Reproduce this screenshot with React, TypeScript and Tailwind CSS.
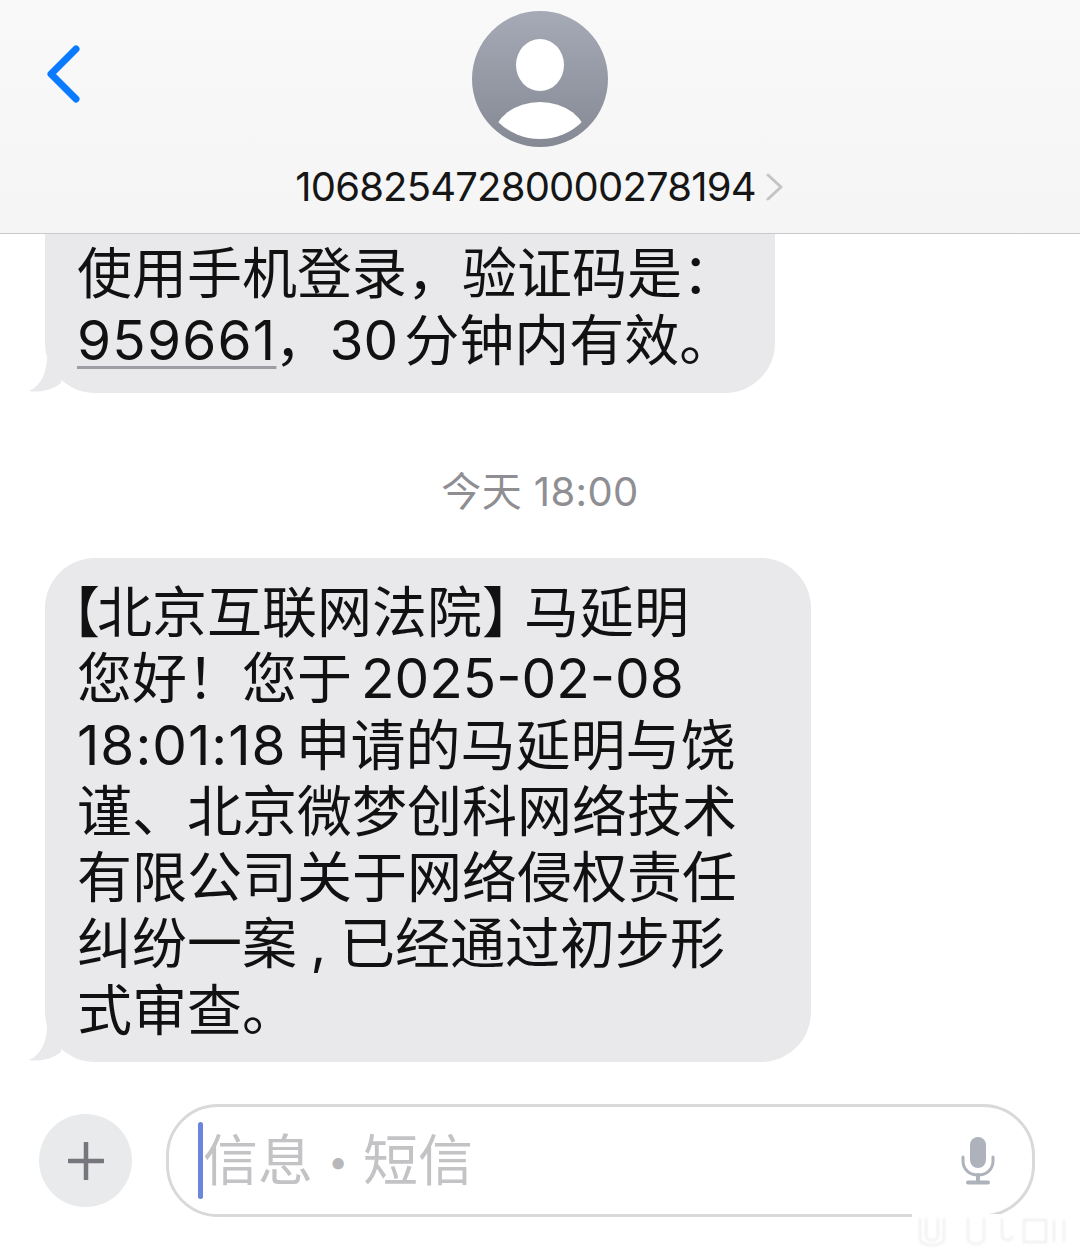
import React from "react";

const Tail = () => (
  <svg className="absolute left-[-17px] bottom-0" width="40" height="36" viewBox="0 0 40 36">
    <path d="M19 0 C19 14 14 28 1 34 C12 36 24 33 33 26 L36 0 Z" fill="#e9e9eb" />
  </svg>
);

const Thin = () => <span className="inline-block w-[9px]" />;

const lines = [
  <><span className="-ml-[32px] tracking-[-3px]">【</span>北京互联网法院<span className="tracking-[-13px]">】</span>马延明</>,
  <>您好！您于<Thin />2025-02-08</>,
  <><span className="tracking-[1px]">18:01:18</span><Thin />申请的马延明与饶</>,
  <>谨、北京微梦创科网络技术</>,
  <>有限公司关于网络侵权责任</>,
  <>纠纷一案<span className="inline-block w-[43px] text-center">,</span>已经通过初步形</>,
  <>式审查。</>,
];

export default function App() {
  return (
    <div lang="zh-CN" className="relative w-[1080px] h-[1256px] overflow-hidden bg-white flex flex-col text-[#111] font-['Inter','Noto_Sans_CJK_SC',sans-serif]">
      <header className="h-[234px] shrink-0 border-b border-[#c9c9cb] bg-gradient-to-b from-[#f9f9f9] to-[#f5f5f5] grid grid-cols-[1fr_auto_1fr]">
        <div className="pl-[46px] pt-[44px]">
          <svg width="36" height="60" viewBox="0 0 36 60" fill="none">
            <path d="M30 5 L5 30 L30 55" stroke="#0a7aff" strokeWidth="7" strokeLinecap="round" strokeLinejoin="round" />
          </svg>
        </div>
        <div className="flex flex-col items-center pt-[11px]">
          <svg width="136" height="136" viewBox="0 0 136 136">
            <defs>
              <linearGradient id="av" x1="0" y1="0" x2="0" y2="1">
                <stop offset="0" stopColor="#a6aab6" />
                <stop offset="1" stopColor="#858994" />
              </linearGradient>
              <clipPath id="inner"><circle cx="68" cy="68" r="60" /></clipPath>
            </defs>
            <circle cx="68" cy="68" r="68" fill="url(#av)" />
            <ellipse cx="68" cy="54" rx="24" ry="26" fill="#fff" />
            <ellipse cx="68" cy="126" rx="46" ry="35" fill="#fff" clipPath="url(#inner)" />
          </svg>
          <div className="flex items-center mt-[17px] h-[46px] whitespace-nowrap">
            <span className="text-[40px] leading-[46px] tracking-[-0.8px] text-[#161616]">10682547280000278194</span>
            <svg className="ml-[9px]" width="20" height="28" viewBox="0 0 20 28" fill="none">
              <path d="M3 2 L16 14 L3 26" stroke="#c4c4c6" strokeWidth="3" strokeLinecap="round" strokeLinejoin="round" />
            </svg>
          </div>
        </div>
        <div />
      </header>

      <main className="flex-1 flex flex-col">
        <div className="relative ml-[45px] w-[730px] h-[159px] shrink-0 bg-[#e9e9eb] rounded-b-[50px] pl-[32px] pt-[6px] text-[55px] leading-[66.5px] whitespace-nowrap">
          <div>使用手机登录，验证码是：</div>
          <div>
            <span className="tracking-[1.2px] underline decoration-[3px] underline-offset-[6px] decoration-[#9d9da3]">959661</span><span className="-ml-[2px]">，</span><span>30</span><span className="inline-block w-[6px]" />分钟内有效。
          </div>
          <Tail />
        </div>

        <div className="text-center text-[40px] leading-[48px] text-[#8e8e93] mt-[75px] tracking-[0.4px]">今天 18:00</div>

        <div className="relative ml-[45px] mt-[42px] w-[766px] h-[504px] shrink-0 bg-[#e9e9eb] rounded-[50px] pl-[32px] pt-[21px] text-[55px] leading-[66.3px] whitespace-nowrap">
          {lines.map((l, i) => (
            <div key={i}>{l}</div>
          ))}
          <Tail />
        </div>

        <div className="flex items-center pl-[39px] mt-[42px]">
          <div className="w-[93px] h-[93px] rounded-full bg-[#e9eaec] flex items-center justify-center">
            <svg width="36" height="38" viewBox="0 0 36 38">
              <path d="M18 1 V37 M1 19 H35" stroke="#77767c" strokeWidth="4.5" strokeLinecap="round" />
            </svg>
          </div>
          <div className="ml-[34px] w-[869px] h-[113px] rounded-[52px] border-[3px] border-[#d9d9dc] bg-white flex items-center pl-[29px] pr-[36px]">
            <div className="w-[5px] h-[77px] rounded-full bg-[#6a86dc]" />
            <span className="text-[55px] leading-[66px] text-[#c3c3c6] whitespace-nowrap">
              信息<span className="inline-block w-[50px] text-center text-[36px] align-[6px] text-[#b8b8bc]">•</span>短信
            </span>
            <svg className="ml-auto" width="36" height="48" viewBox="0 0 36 48" fill="none">
              <rect x="10" y="0" width="16" height="31" rx="8" fill="#adb2bb" />
              <path d="M3 20 V24 C3 33 10 38 18 38 C26 38 33 33 33 24 V20" stroke="#adb2bb" strokeWidth="3" strokeLinecap="round" />
              <path d="M18 38 V45 M8 45.5 H28" stroke="#adb2bb" strokeWidth="4" strokeLinecap="round" />
            </svg>
          </div>
        </div>
      </main>

      <svg className="absolute left-[912px] top-[1212px]" width="168" height="44" viewBox="0 0 168 44" fill="none">
        <defs>
          <filter id="wm"><feGaussianBlur stdDeviation="1.2" /></filter>
        </defs>
        <rect x="0" y="2" width="160" height="38" fill="#fff" />
        <g filter="url(#wm)" stroke="#eeeeef" strokeWidth="2">
          <path d="M8 6 V26 C8 36 32 36 32 26 V6" />
          <path d="M14 6 V24 C14 30 26 30 26 24 V6" />
          <path d="M56 6 V26 C56 34 72 34 72 26 V6" />
          <path d="M90 6 V22 C90 30 100 30 100 24" />
          <path d="M112 8 H134 V30 H112 Z" />
          <path d="M142 8 V30 M152 8 V30" />
        </g>
      </svg>
    </div>
  );
}
